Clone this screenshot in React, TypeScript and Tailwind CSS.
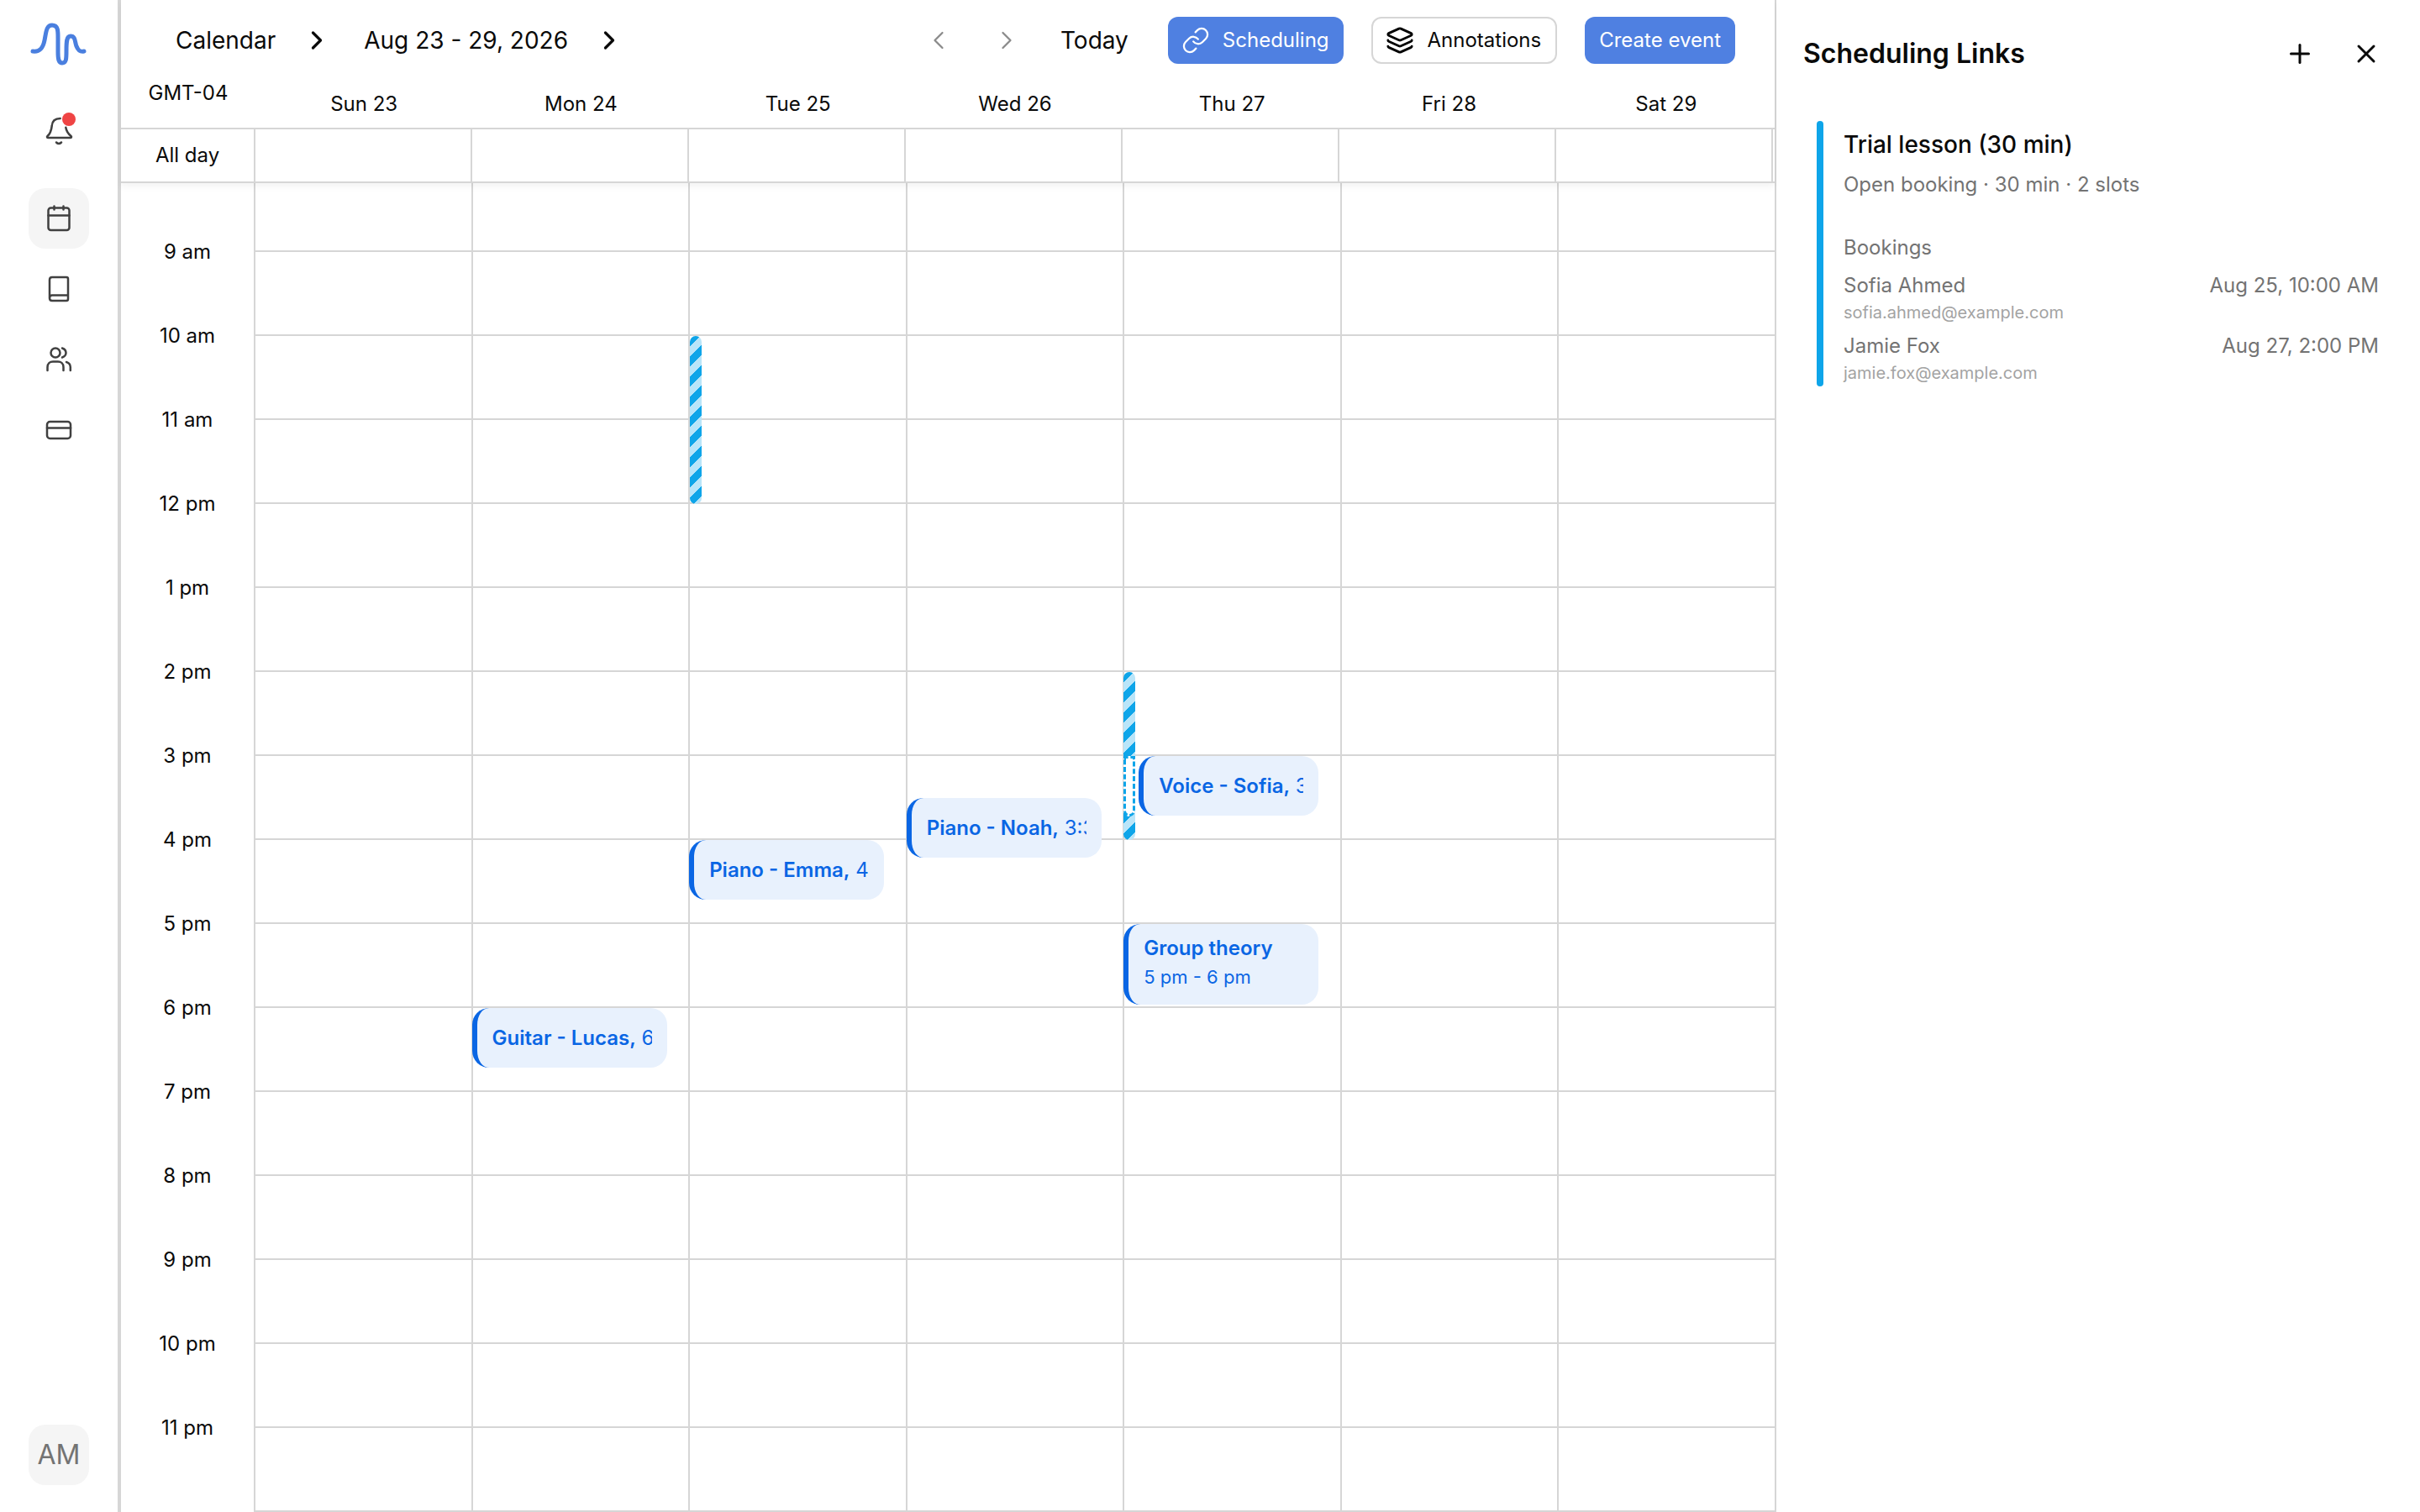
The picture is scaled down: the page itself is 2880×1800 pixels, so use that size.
import { ChevronLeft, ChevronRight, Layers, Link, Plus, X } from 'lucide-react';

const DAYS = ['Sun 23', 'Mon 24', 'Tue 25', 'Wed 26', 'Thu 27', 'Fri 28', 'Sat 29'];
const HOURS = ['9 am', '10 am', '11 am', '12 pm', '1 pm', '2 pm', '3 pm', '4 pm', '5 pm', '6 pm', '7 pm', '8 pm', '9 pm', '10 pm', '11 pm'];

const STRIPES =
  'bg-[repeating-linear-gradient(135deg,#0ea5e9_0px,#0ea5e9_8.5px,#b9e5f9_8.5px,#b9e5f9_17px)]';

function Logo() {
  return (
    <svg viewBox="35 22 72 60" width="72" height="60" fill="none" stroke="#4a7fdf" strokeWidth="5" strokeLinecap="round">
      <path d="M40 61C48 62 52 58 54 48C56 38 56 30 63 30C71 30 70 38 70 50V62C70 71 71 75 75 75C80 75 80 70 80 60C80 50 80 43 85 43C91 43 90 50 92 55C94 60 96 62 101 61" />
    </svg>
  );
}

function BellIcon() {
  return (
    <svg viewBox="0 0 40 40" width="40" height="40" fill="none" stroke="#404040" strokeWidth="2.5" strokeLinecap="round" strokeLinejoin="round">
      <path d="M21.7 5C15 5 12 9 11.7 14C11 20 9 24 6.5 26C5.5 27 6 28 7.5 28H33.5C35 28 35.5 27 34.5 26C31 23 29 20 28.3 15.7" />
      <path d="M17 33.5Q20 36.5 23 33.5" />
    </svg>
  );
}

function CalendarIcon() {
  return (
    <svg viewBox="0 0 40 40" width="40" height="40" fill="none" stroke="#404040" strokeWidth="2.5" strokeLinecap="round" strokeLinejoin="round">
      <rect x="7.5" y="7.5" width="25" height="26.5" rx="3" />
      <path d="M7.5 16.5H32.5M14.5 5.5V9.5M25.5 5.5V9.5" />
    </svg>
  );
}

function BookIcon() {
  return (
    <svg viewBox="0 0 40 40" width="40" height="40" fill="none" stroke="#404040" strokeWidth="2.5" strokeLinecap="round" strokeLinejoin="round">
      <path d="M9 31V9C9 7 10 6 12 6H29C30.5 6 31 6.800 31 8V32C31 33.500 30.500 34 29 34H12C10 34 9 33 9 31C9 28.500 10 27.500 12 27.500H31" />
    </svg>
  );
}

function UsersIcon() {
  return (
    <svg viewBox="0 0 40 40" width="40" height="40" fill="none" stroke="#404040" strokeWidth="2.5" strokeLinecap="round" strokeLinejoin="round">
      <circle cx="16" cy="12" r="5.500" />
      <path d="M6.500 33V29C6.500 25 9.500 22.500 13 22.500H19C22.500 22.500 25.500 25 25.500 29V33" />
      <path d="M24 6.500C27 7.500 28.500 9.500 28.500 12C28.500 14.500 27 16.500 24 17.500" />
      <path d="M29 23C32 24 33.800 26 33.800 29V33" />
    </svg>
  );
}

function CardIcon() {
  return (
    <svg viewBox="0 0 40 40" width="40" height="40" fill="none" stroke="#404040" strokeWidth="2.5" strokeLinecap="round" strokeLinejoin="round">
      <rect x="6" y="10" width="28" height="20" rx="3.500" />
      <path d="M6 17.500H34" />
    </svg>
  );
}

function Sidebar() {
  return (
    <aside className="flex h-full w-[144px] shrink-0 flex-col items-center border-r-4 border-[#d6d6d6] pt-[22px] pb-8">
      <Logo />
      <button className="relative mt-[38px] flex h-[72px] w-[72px] items-center justify-center">
        <BellIcon />
        <span className="absolute left-[40px] top-[14px] h-4 w-4 rounded-full bg-[#ef4444]" />
      </button>
      <div className="mt-8 flex flex-col gap-3">
        <button className="flex h-[72px] w-[72px] items-center justify-center rounded-[20px] bg-[#f5f5f5]">
          <CalendarIcon />
        </button>
        <button className="flex h-[72px] w-[72px] items-center justify-center">
          <BookIcon />
        </button>
        <button className="flex h-[72px] w-[72px] items-center justify-center">
          <UsersIcon />
        </button>
        <button className="flex h-[72px] w-[72px] items-center justify-center">
          <CardIcon />
        </button>
      </div>
      <div className="mt-auto flex h-[72px] w-[72px] items-center justify-center rounded-[20px] bg-[#f5f5f5] text-[32px] text-[#737373]">
        AM
      </div>
    </aside>
  );
}

function TopBar() {
  return (
    <div className="flex h-24 items-center justify-between pl-[65px] pr-[47px]">
      <div className="flex items-center text-[28px] text-[#0a0a0a]">
        <span>Calendar</span>
        <ChevronRight size={36} strokeWidth={2.2} className="ml-[31px] mr-[38px]" />
        <span>Aug 23 - 29, 2026</span>
        <ChevronRight size={36} strokeWidth={2.2} className="ml-[31px]" />
      </div>
      <div className="flex items-center">
        <ChevronLeft size={36} strokeWidth={1.5} className="text-[#8a8a8a]" />
        <ChevronRight size={36} strokeWidth={1.5} className="ml-[45px] text-[#8a8a8a]" />
        <span className="ml-[46px] text-[28px] text-[#0a0a0a]">Today</span>
        <button className="ml-[47px] flex h-14 items-center gap-[15px] rounded-[12px] bg-[#4f80e1] pl-4 pr-[17px] text-[24px] text-white">
          <Link size={34} strokeWidth={1.6} />
          Scheduling
        </button>
        <button className="ml-[33px] flex h-14 items-center gap-[16px] rounded-[12px] border-2 border-[#d6d6d6] bg-white pl-[15px] pr-[17px] text-[24px] text-[#0a0a0a]">
          <Layers size={34} strokeWidth={2} className="text-black" />
          Annotations
        </button>
        <button className="ml-[33px] flex h-14 items-center rounded-[12px] bg-[#4f80e1] px-[17px] text-[24px] text-white">
          Create event
        </button>
      </div>
    </div>
  );
}

function CalendarHead() {
  return (
    <div className="relative z-10 bg-white shadow-[0_4px_8px_rgba(0,0,0,0.05)]">
      <TopBar />
      <div className="flex h-[58px] border-b-2 border-[#d6d6d6]">
        <div className="w-40 shrink-0 text-center text-[24px] leading-[30px] text-[#0a0a0a]">GMT-04</div>
        <div className="grid flex-1 grid-cols-7">
          {DAYS.map((day) => (
            <div key={day} className="pt-[13px] text-center text-[24px] leading-[30px] text-[#0a0a0a]">
              {day}
            </div>
          ))}
        </div>
      </div>
      <div className="flex h-[64px] border-b-2 border-[#d6d6d6] pr-[2px]">
        <div className="flex w-40 shrink-0 items-center justify-center border-r-2 border-[#d6d6d6] text-[24px] text-[#0a0a0a]">
          All day
        </div>
        <div className="grid flex-1 grid-cols-7">
          {DAYS.map((day) => (
            <div key={day} className="border-r-2 border-[#d6d6d6]" />
          ))}
        </div>
      </div>
    </div>
  );
}

function EventCard({ className, title, time }: { className: string; title: string; time: string }) {
  return (
    <div className={`absolute flex h-[71px] items-center rounded-[20px] border-l-[6px] border-[#0a66e4] bg-[#e8f1fd] pl-[18px] pr-[18px] text-[24px] text-[#0a66e4] ${className}`}>
      <div className="w-full overflow-hidden whitespace-nowrap">
        <span className="font-semibold">{title},</span> {time}
      </div>
    </div>
  );
}

function DayColumn({ index }: { index: number }) {
  return (
    <div className={index < 6 ? 'relative border-r-2 border-[#d6d6d6]' : 'relative'}>
      <div className="h-[82px] border-b-2 border-[#d6d6d6]" />
      {HOURS.map((hour) => (
        <div key={hour} className="h-[100px] border-b-2 border-[#d6d6d6]" />
      ))}
      {index === 1 && <EventCard className="left-[-1px] top-[982px] w-[232px]" title="Guitar - Lucas" time="6:00 pm" />}
      {index === 2 && (
        <>
          <div className={`absolute left-0 top-[182px] h-[200px] w-[14px] rounded-[7px] ${STRIPES}`} />
          <EventCard className="left-[-1px] top-[782px] w-[232px]" title="Piano - Emma" time="4:00 pm" />
        </>
      )}
      {index === 3 && <EventCard className="left-[-1px] top-[732px] w-[232px]" title="Piano - Noah" time="3:30 pm" />}
      {index === 4 && (
        <>
          <div className={`absolute left-[-1px] top-[582px] h-[200px] w-[14px] overflow-hidden rounded-[7px] ${STRIPES}`}>
            <div className="mt-[100px] h-[72px] rounded-b-[7px] border-[3px] border-dashed border-[#0ea5e9] bg-white" />
          </div>
          <EventCard className="left-[17px] top-[682px] w-[214px]" title="Voice - Sofia" time="3:00 pm" />
          <div className="absolute left-[-1px] top-[882px] flex h-24 w-[232px] flex-col justify-center rounded-[20px] border-l-[6px] border-[#0a66e4] bg-[#e8f1fd] pb-1 pl-[18px] text-[24px] leading-[35px] text-[#0a66e4]">
            <div className="font-semibold">Group theory</div>
            <div className="text-[22px]">5 pm - 6 pm</div>
          </div>
        </>
      )}
    </div>
  );
}

function CalendarBody() {
  return (
    <div className="flex min-h-0 flex-1 overflow-hidden">
      <div className="w-40 shrink-0 border-r-2 border-[#d6d6d6] pt-8 text-[24px] text-[#0a0a0a]">
        {HOURS.map((hour) => (
          <div key={hour} className="flex h-[100px] items-center justify-center">
            {hour}
          </div>
        ))}
      </div>
      <div className="grid w-[1810px] shrink-0 grid-cols-7 content-start">
        {DAYS.map((day, i) => (
          <DayColumn key={day} index={i} />
        ))}
      </div>
    </div>
  );
}

function Booking({ name, email, date }: { name: string; email: string; date: string }) {
  return (
    <div className="flex justify-between">
      <div>
        <div className="text-[24px] leading-[36px] text-[#737373]">{name}</div>
        <div className="text-[20px] leading-[28px] text-[#a3a3a3]">{email}</div>
      </div>
      <div className="text-[24px] leading-[36px] text-[#737373]">{date}</div>
    </div>
  );
}

function SchedulingPanel() {
  return (
    <aside className="h-full w-[768px] shrink-0 border-l-2 border-[#d6d6d6] pl-8 pr-[46px]">
      <div className="flex h-[127px] items-center justify-between">
        <h2 className="text-[32px] font-semibold text-[#0a0a0a]">Scheduling Links</h2>
        <div className="flex items-center gap-[43px] text-[#0a0a0a]">
          <Plus size={36} strokeWidth={2} />
          <X size={36} strokeWidth={2} />
        </div>
      </div>
      <div className="ml-4 mt-[17px] flex">
        <div className="w-2 rounded-full bg-[#0ea5e9]" />
        <div className="flex-1 pb-[2px] pl-[24px] pr-[3px] pt-2">
          <div className="text-[28px] font-medium leading-[40px] text-[#0a0a0a]">Trial lesson (30 min)</div>
          <div className="mt-[10px] text-[24px] leading-[36px] text-[#737373]">Open booking · 30 min · 2 slots</div>
          <div className="mt-[39px] text-[24px] leading-[36px] text-[#737373]">Bookings</div>
          <div className="mt-[9px] flex flex-col gap-2">
            <Booking name="Sofia Ahmed" email="sofia.ahmed@example.com" date="Aug 25, 10:00 AM" />
            <Booking name="Jamie Fox" email="jamie.fox@example.com" date="Aug 27, 2:00 PM" />
          </div>
        </div>
      </div>
    </aside>
  );
}

export default function App() {
  return (
    <div className="flex h-screen w-screen overflow-hidden bg-white [font-family:Inter,sans-serif]">
      <Sidebar />
      <main className="flex h-full min-w-0 flex-1 flex-col">
        <CalendarHead />
        <CalendarBody />
      </main>
      <SchedulingPanel />
    </div>
  );
}
